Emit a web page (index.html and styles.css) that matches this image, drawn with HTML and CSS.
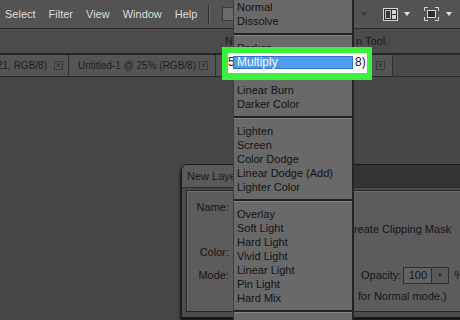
FILE: index.html
```html
<!DOCTYPE html>
<html>

<head>
    <meta charset="utf-8">
    <title>Layer blend modes</title>
    <link rel="stylesheet" href="styles.css">
</head>

<body>
<div id="app">
    <div class="menubar">
        <div class="menus">
            <span>Select</span>
            <span>Filter</span>
            <span>View</span>
            <span>Window</span>
            <span>Help</span>
        </div>
        <span class="bar-sep"></span>
        <span class="bridge-btn"></span>
        <i class="caret caret-dim"></i>
        <span class="bar-icon icon-arrange">
            <svg width="15" height="13" viewBox="0 0 15 13">
                <rect x="0.5" y="0.5" width="14" height="12" fill="#2d2d2d" stroke="#d6d6d6"/>
                <rect x="2.5" y="2.5" width="5" height="8" fill="#3a3a3a" stroke="#bdbdbd"/>
                <rect x="9" y="2" width="4" height="4" fill="#d6d6d6"/>
                <rect x="9" y="7" width="4" height="4" fill="#d6d6d6"/>
            </svg>
        </span>
        <i class="caret"></i>
        <span class="bar-icon icon-screen">
            <svg width="15" height="14" viewBox="0 0 15 14">
                <path d="M0.5 4V0.5H4M11 0.5H14.5V4M14.5 10V13.5H11M4 13.5H0.5V10" fill="none" stroke="#d6d6d6"/>
                <rect x="3.5" y="3.5" width="8" height="7" fill="#2d2d2d" stroke="#d6d6d6"/>
            </svg>
        </span>
        <i class="caret"></i>
    </div>

    <div class="options">
        <span>N</span>
        <span class="hint">n Tool.</span>
    </div>

    <div class="tabs">
        <div class="tab tab-cut"><span class="tab-title">Untitled-1 @ 25% (Layer 21, RGB/8)</span><span class="close">&times;</span></div>
        <div class="tab tab-mid"><span class="tab-title">Untitled-1 @ 25% (RGB/8)</span><span class="close">&times;</span></div>
        <div class="tab tab-last"><span class="tab-title">Untitled-2 @ 25% (RGB/8)</span><span class="close">&times;</span></div>
    </div>

    <div class="workspace"></div>
</div>

<div class="dialog">
    <div class="dialog-title">New Layer</div>
    <div class="dialog-body">
        <div class="form">
            <span class="lbl">Name:</span>
            <span class="field"></span>
            <span></span>

            <span></span>
            <span class="check-cell"><i class="checkbox"></i></span>
            <span class="clip">Create Clipping Mask</span>

            <span class="lbl">Color:</span>
            <span class="field"></span>
            <span></span>

            <span class="lbl">Mode:</span>
            <span class="field"></span>
            <span class="opacity">
                Opacity:
                <span class="num">100</span>
                <span class="num-btn"><i class="tri-right"></i></span>
                <span class="pct">%</span>
            </span>

            <span></span>
            <span class="note-head">(No neutral color exists</span>
            <span class="note">for Normal mode.)</span>
        </div>
    </div>
</div>

<ul class="blend-menu">
    <li>Normal</li>
    <li>Dissolve</li>
    <li class="sep"></li>
    <li>Darken</li>
    <li>Multiply</li>
    <li>Color Burn</li>
    <li>Linear Burn</li>
    <li>Darker Color</li>
    <li class="sep"></li>
    <li>Lighten</li>
    <li>Screen</li>
    <li>Color Dodge</li>
    <li>Linear Dodge (Add)</li>
    <li>Lighter Color</li>
    <li class="sep"></li>
    <li>Overlay</li>
    <li>Soft Light</li>
    <li>Hard Light</li>
    <li>Vivid Light</li>
    <li>Linear Light</li>
    <li>Pin Light</li>
    <li>Hard Mix</li>
    <li class="sep"></li>
    <li>Difference</li>
</ul>

<!-- green call-out round the picked mode -->
<div class="callout">
    <span class="peek">5</span>
    <span class="pick">Multiply</span>
    <span class="tail">8)</span>
</div>
</body>

</html>
```

FILE: styles.css
```css
* {
    box-sizing: border-box;
}

body {
    margin: 0;
    width: 460px;
    height: 320px;
    overflow: hidden;
    position: relative;
    background-color: #474747;
    font-family: "Liberation Sans", Arial, sans-serif;
    font-size: 11px;
}

#app {
    display: flex;
    flex-direction: column;
    height: 320px;
}

/* top menu bar */
.menubar {
    display: flex;
    align-items: center;
    height: 29px;
    flex: none;
    background-color: #535353;
    border-bottom: 1px solid #2b2b2b;
    color: #dcdcdc;
}

.menus {
    display: flex;
    gap: 13px;
    width: 203px;
    padding-left: 5px;
}

.bar-sep {
    width: 2px;
    height: 19px;
    margin-left: 5px;
    border-left: 1px solid #2e2e2e;
    border-right: 1px solid #6a6a6a;
}

.bridge-btn {
    width: 14px;
    height: 14px;
    margin-left: 12px;
    background-color: #6a6a6a;
    border: 1px solid #3a3a3a;
}

.caret {
    width: 0;
    height: 0;
    margin-left: 6px;
    border-top: 4px solid #e4e4e4;
    border-left: 3px solid transparent;
    border-right: 3px solid transparent;
}

.caret-dim {
    margin-left: 125px;
    border-top-color: #3c3c3c;
}

.bar-icon {
    display: flex;
}

.icon-arrange {
    margin-left: 16px;
}

.icon-screen {
    margin-left: 14px;
}

.icon-screen + .caret {
    margin-left: 7px;
}

/* options bar */
.options {
    display: flex;
    align-items: center;
    height: 26px;
    flex: none;
    padding-left: 225px;
    background-color: #4b4b4b;
    border-bottom: 2px solid #262626;
    color: #1c1c1c;
}

.hint {
    margin-left: 123px;
}

/* document tabs */
.tabs {
    display: flex;
    height: 22px;
    flex: none;
    background-color: #4a4a4a;
    border-bottom: 1px solid #2a2a2a;
    font-size: 10px;
    color: #1e1e1e;
}

.tab {
    display: flex;
    align-items: center;
    overflow: hidden;
    white-space: nowrap;
    background-color: #555;
    border-right: 1px solid #2f2f2f;
}

.tab-cut {
    width: 69px;
    justify-content: flex-end;
    padding-right: 5px;
}

.tab-mid {
    width: 147px;
    padding-left: 9px;
}

.tab-last {
    width: 177px;
    justify-content: flex-end;
    padding-right: 7px;
}

.close {
    display: flex;
    align-items: center;
    justify-content: center;
    flex: none;
    width: 9px;
    height: 9px;
    margin-left: 7px;
    border: 1px solid #3a3a3a;
    font-size: 9px;
    line-height: 9px;
    color: #2a2a2a;
}

.tab-mid .close {
    margin-left: auto;
    margin-right: 7px;
}

.workspace {
    flex: 1;
    background-color: #474747;
}

/* New Layer dialog */
.dialog {
    position: absolute;
    left: 181px;
    top: 164px;
    width: 300px;
    height: 154px;
    background-color: #4c4c4c;
    border: 1px solid #1b1b1b;
    border-radius: 6px 0 0 0;
    box-shadow: -1px 3px 3px rgba(0, 0, 0, 0.7);
}

.dialog-title {
    height: 23px;
    line-height: 23px;
    padding-left: 5px;
    border-radius: 5px 0 0 0;
    background: linear-gradient(to right, #5a5a5a 50px, #343434 175px);
    border-bottom: 1px solid #2a2a2a;
    color: #1c1c1c;
}

.dialog-body {
    padding: 2px 4px 5px 4px;
}

.form {
    display: grid;
    grid-template-columns: 41px 109px 1fr;
    grid-template-rows: 18px 26px 20px 26px 16px;
    column-gap: 4px;
    align-items: center;
    height: 122px;
    padding: 7px 0 0 1px;
    background-color: #5c5c5c;
    border: 1px solid #262626;
    box-shadow: inset 1px 1px 0 #707070;
    color: #161616;
    white-space: nowrap;
}

.lbl {
    text-align: right;
}

.field {
    height: 16px;
    background-color: #6a6a6a;
    border: 1px solid #333;
}

.check-cell {
    display: flex;
    justify-content: flex-end;
}

.checkbox {
    width: 11px;
    height: 11px;
    border: 1px solid #2a2a2a;
    background-color: #6a6a6a;
}

.opacity {
    display: flex;
    align-items: center;
    margin-left: 15px;
}

.num {
    width: 29px;
    height: 17px;
    margin-left: 2px;
    line-height: 15px;
    text-align: center;
    background-color: #626262;
    border: 1px solid #2e2e2e;
}

.num-btn {
    display: flex;
    align-items: center;
    justify-content: center;
    width: 17px;
    height: 17px;
    background-color: #595959;
    border: 1px solid #2e2e2e;
    border-left: none;
}

.tri-right {
    width: 0;
    height: 0;
    border-left: 3px solid #262626;
    border-top: 2px solid transparent;
    border-bottom: 2px solid transparent;
}

.pct {
    margin-left: 5px;
}

.note-head {
    text-align: right;
}

.note {
    margin-left: 12px;
}

/* blend mode drop-down */
.blend-menu {
    position: absolute;
    left: 233px;
    top: 0;
    width: 121px;
    height: 330px;
    margin: 0;
    padding: 0;
    list-style: none;
    background-color: #696969;
    border-left: 1px solid #3e3e3e;
    border-right: 2px solid #242424;
    color: #131313;
}

.blend-menu li {
    height: 14px;
    line-height: 14px;
    padding-left: 3px;
    white-space: nowrap;
}

.blend-menu li.sep {
    height: 0;
    margin: 5px 0;
    padding: 0;
    border-top: 2px solid #222;
    border-bottom: 1px solid #858585;
}

/* highlight */
.callout {
    position: absolute;
    left: 222px;
    top: 47px;
    width: 150px;
    height: 33px;
    display: flex;
    align-items: flex-start;
    background-color: #fff;
    border: 6px solid #3df03d;
    border-right-width: 5px;
    border-bottom-width: 7px;
    font-size: 12px;
    color: #1a1a1a;
}

.peek {
    width: 5px;
    overflow: hidden;
    line-height: 19px;
}

.pick {
    width: 120px;
    height: 13px;
    margin-top: 3px;
    padding-left: 3px;
    line-height: 11px;
    background-color: #4f9cef;
    border: 1px solid #2f6fc4;
    color: #f4f8ff;
}

.tail {
    margin-left: 2px;
    line-height: 19px;
}
```
